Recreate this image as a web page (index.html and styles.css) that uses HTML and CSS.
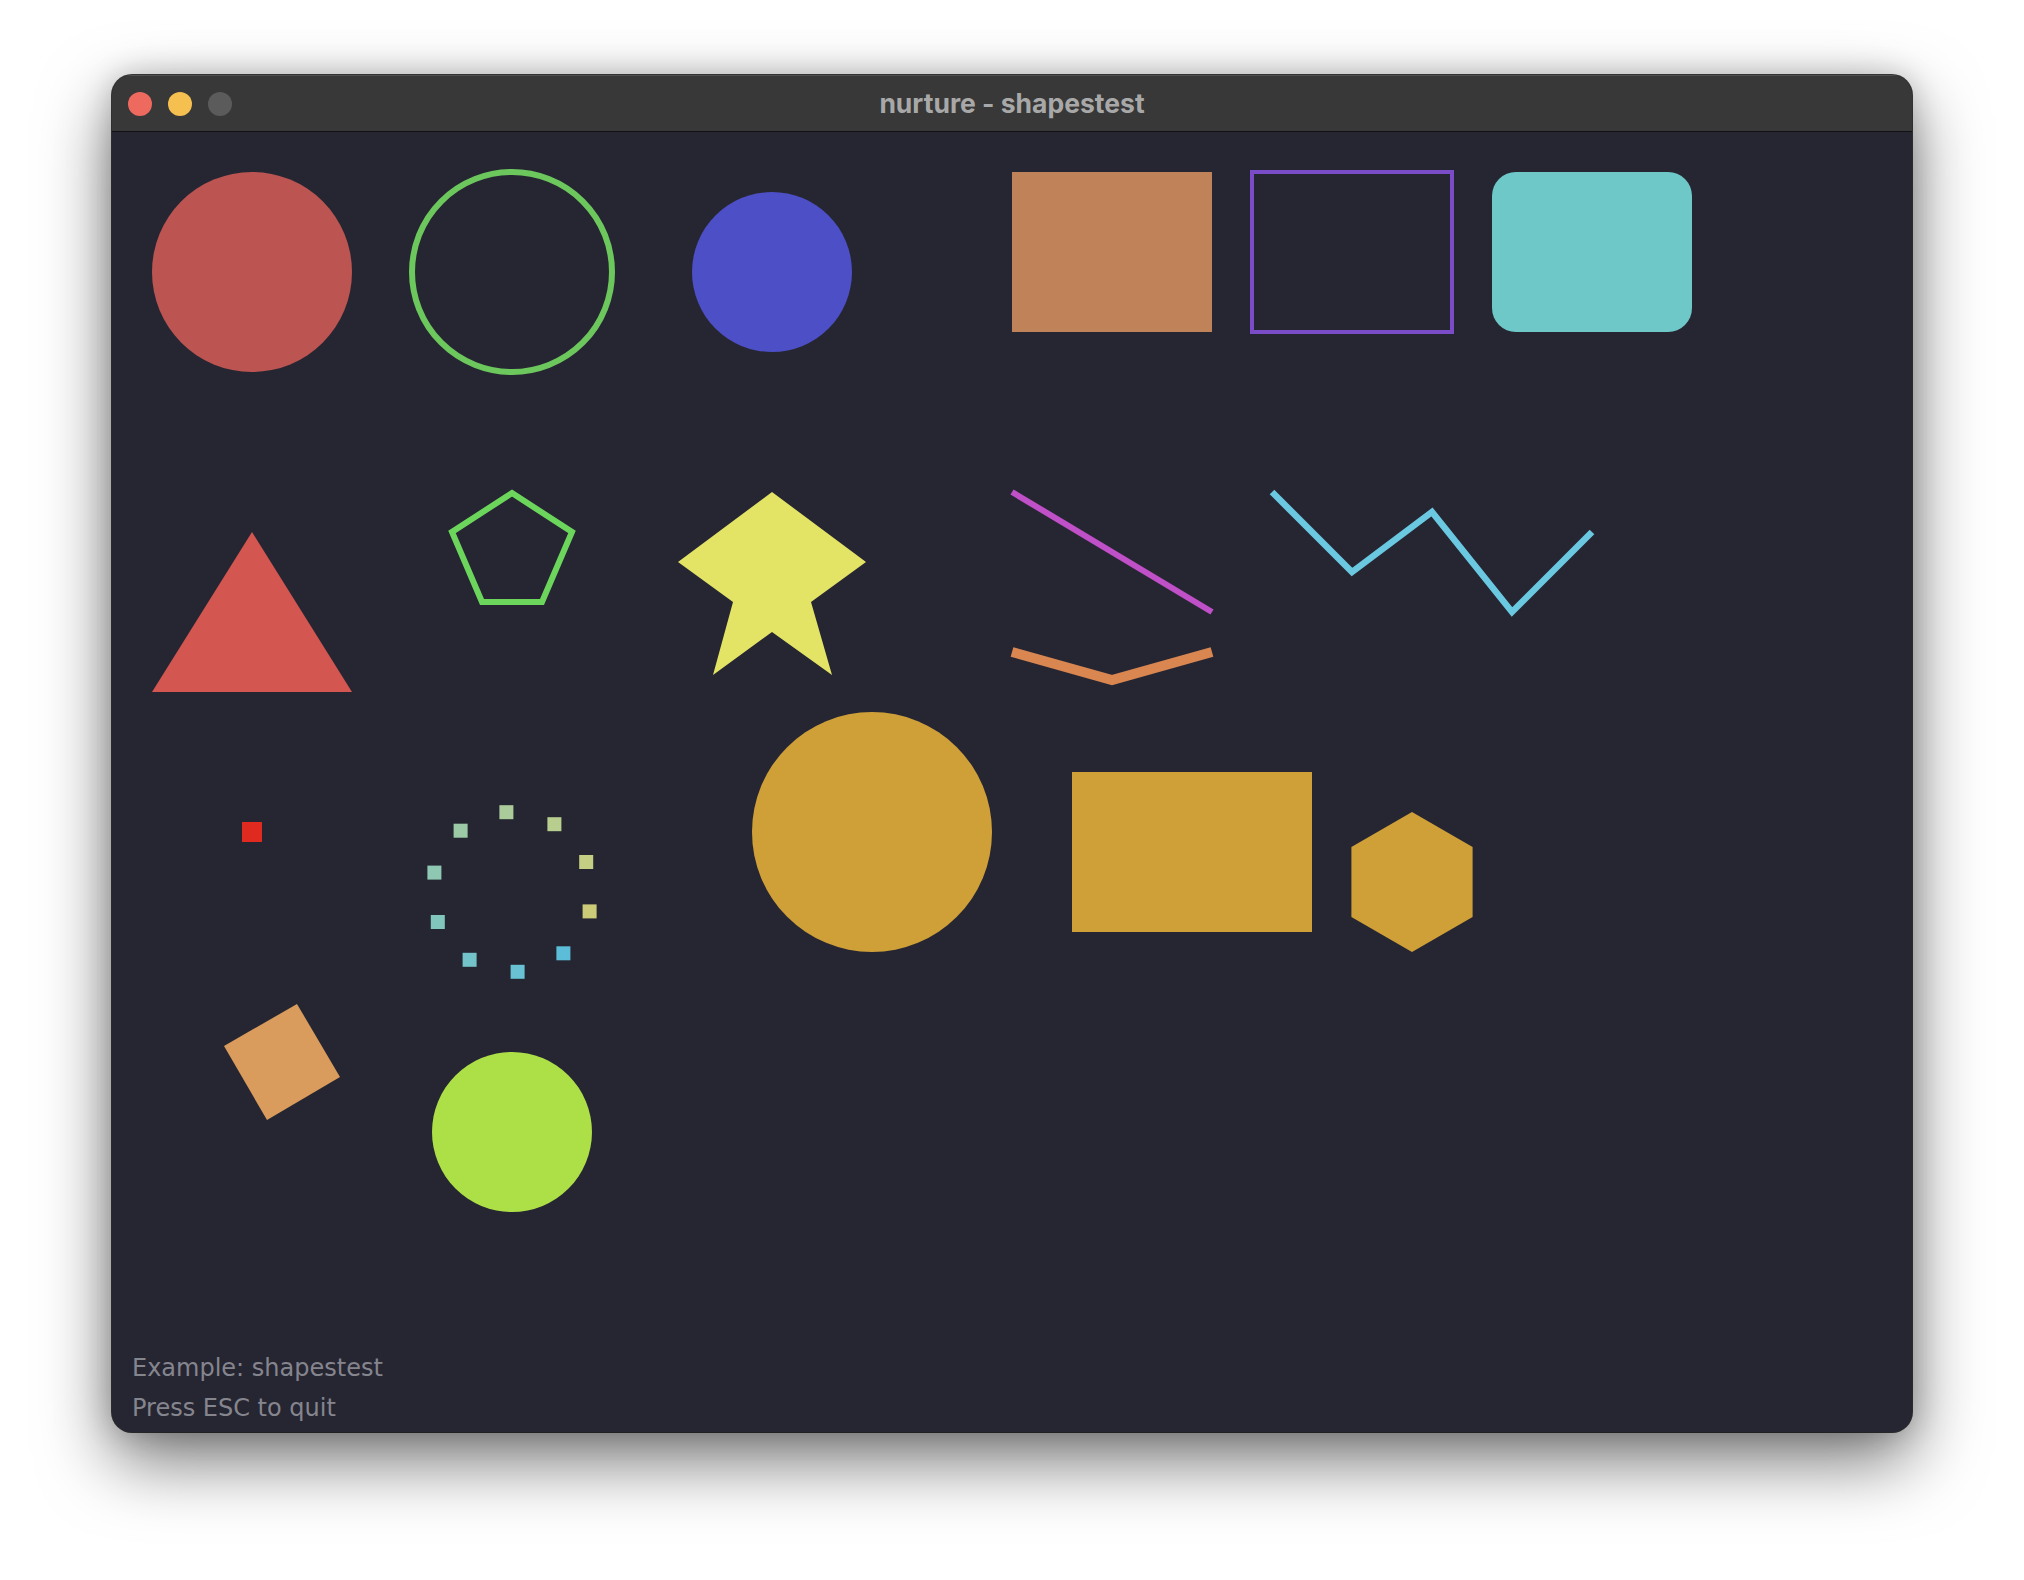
FILE: index.html
```html
<!DOCTYPE html>
<html>
<head>
<meta charset="utf-8">
<link rel="stylesheet" href="styles.css">
</head>
<body>
<div class="window">
  <div class="titlebar">
    <div class="lights">
      <span class="light red"></span>
      <span class="light yellow"></span>
      <span class="light gray"></span>
    </div>
    <div class="title">nurture - shapestest</div>
    <div></div>
  </div>
  <div class="content">
    <svg class="canvas" width="1800" height="1214" viewBox="0 0 1800 1214">
      <circle cx="140" cy="140" r="100" fill="#bc5552"/>
      <circle cx="400" cy="140" r="100" fill="none" stroke="#6cc75c" stroke-width="6"/>
      <circle cx="660" cy="140" r="80" fill="#4d4fc6"/>
      <rect x="900" y="40" width="200" height="160" fill="#c08258"/>
      <rect x="1140" y="40" width="200" height="160" fill="none" stroke="#7b4cc8" stroke-width="4"/>
      <rect x="1380" y="40" width="200" height="160" rx="24" fill="#6fc8c8"/>

      <polygon points="140,400 40,560 240,560" fill="#d35650"/>
      <polygon points="400,361 460,400 430,470 370,470 340,400" fill="none" stroke="#6cd65c" stroke-width="6" stroke-linejoin="miter"/>
      <polygon points="660,360 754,430 699,470 720,543 660,500 601,543 621,470 566,430" fill="#e3e366"/>
      <line x1="900" y1="360" x2="1100" y2="480" stroke="#c050c8" stroke-width="6"/>
      <polyline points="900,520 1000,548 1100,520" fill="none" stroke="#d98650" stroke-width="10" stroke-linejoin="miter"/>
      <polyline points="1160,360 1240,440 1320,380 1400,480 1480,400" fill="none" stroke="#6ac8e0" stroke-width="6.5" stroke-linejoin="miter"/>

      <rect x="130" y="690" width="20" height="20" fill="#e02a20"/>
      <rect x="470.6" y="772.4" width="14" height="14" fill="#cccc78"/>
      <rect x="444.4" y="814.3" width="14" height="14" fill="#5bbdd8"/>
      <rect x="398.6" y="832.8" width="14" height="14" fill="#68c2d3"/>
      <rect x="350.6" y="820.8" width="14" height="14" fill="#72c4ca"/>
      <rect x="318.8" y="783.0" width="14" height="14" fill="#80c6bd"/>
      <rect x="315.4" y="733.6" width="14" height="14" fill="#8ec8b2"/>
      <rect x="341.6" y="691.7" width="14" height="14" fill="#9ccaa6"/>
      <rect x="387.4" y="673.2" width="14" height="14" fill="#abcc9a"/>
      <rect x="435.4" y="685.2" width="14" height="14" fill="#b8ce8e"/>
      <rect x="467.2" y="723.0" width="14" height="14" fill="#c5cf83"/>
      <circle cx="760" cy="700" r="120" fill="#d0a038"/>
      <rect x="960" y="640" width="240" height="160" fill="#d0a038"/>
      <polygon points="1300,680 1360.6,715 1360.6,785 1300,820 1239.4,785 1239.4,715" fill="#d0a038"/>

      <polygon points="185,872 228,945 155,988 112,914" fill="#d99c5c"/>
      <circle cx="400" cy="1000" r="80" fill="#ade047"/>
    </svg>
    <div class="caption">
      <div>Example: shapestest</div>
      <div>Press ESC to quit</div>
    </div>
  </div>
</div>
</body>
</html>
```
FILE: styles.css
```css
html, body {
  margin: 0;
  padding: 0;
}
body {
  background: #ffffff;
  width: 2024px;
  height: 1580px;
  overflow: hidden;
  padding: 75px 0 0 112px;
  box-sizing: border-box;
}
.window {
  width: 1800px;
  border-radius: 20px;
  overflow: hidden;
  background: #262633;
  box-shadow: 0 0 0 1px rgba(0, 0, 0, 0.75), 0 28px 70px rgba(0, 0, 0, 0.55), 0 0 30px rgba(0, 0, 0, 0.2);
}
.titlebar {
  height: 56px;
  background: #383838;
  border-bottom: 1px solid #121212;
  display: grid;
  grid-template-columns: 1fr auto 1fr;
  align-items: center;
  box-shadow: inset 0 1px 0 rgba(255, 255, 255, 0.12);
}
.lights {
  display: flex;
  gap: 16px;
  padding-left: 16px;
  padding-top: 1px;
}
.light {
  width: 24px;
  height: 24px;
  border-radius: 50%;
  display: block;
}
.red { background: #ee6a5f; }
.yellow { background: #f5c04f; }
.gray { background: #5b5b5b; }
.title {
  font-family: "Inter", "Open Sans", sans-serif;
  font-weight: 700;
  font-size: 26.5px;
  color: #a8a8a8;
}
.content {
  height: 1300px;
}
.canvas {
  display: block;
}
.caption {
  padding: 2px 0 4px 20px;
  font-family: "DejaVu Sans", "Noto Sans", sans-serif;
  font-size: 24px;
  line-height: 40px;
  color: #85858e;
}
```
